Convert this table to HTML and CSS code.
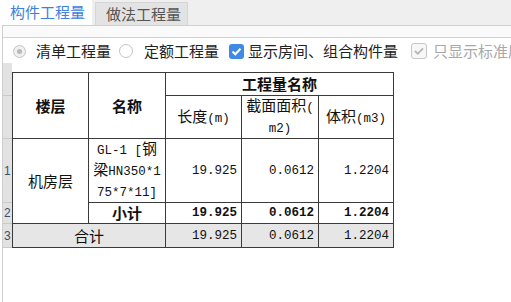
FILE: index.html
```html
<!DOCTYPE html>
<html>
<head>
<meta charset="utf-8">
<link rel="stylesheet" href="styles.css">
</head>
<body>
<div class="tabs">
  <div class="tab active">构件工程量</div>
  <div class="tab">做法工程量</div>
</div>
<div class="panel">
  <div class="band"></div>
  <div class="opts">
    <span class="radio on"><span class="dot"></span></span><span class="lbl l1">清单工程量</span>
    <span class="radio r2"></span><span class="lbl l2">定额工程量</span>
    <span class="cb on"><svg width="15" height="15" viewBox="0 0 15 15"><path d="M3.5 7.5 L6.3 10.3 L11.5 4.8" fill="none" stroke="#fff" stroke-width="2"/></svg></span><span class="lbl l3">显示房间、组合构件量</span>
    <span class="cb dis"><svg width="16" height="16" viewBox="0 0 16 16"><path d="M4 8 L6.8 10.8 L12 5.3" fill="none" stroke="#b4b4b4" stroke-width="1.8"/></svg></span><span class="lbl l4">只显示标准层</span>
  </div>
  <div class="gridwrap">
  <table class="grid">
    <colgroup>
      <col class="c0"><col class="c1"><col class="c2"><col class="c3"><col class="c4"><col class="c5">
    </colgroup>
    <tr class="h1">
      <td class="g"></td>
      <td class="first top b" rowspan="2">楼层</td>
      <td class="top b" rowspan="2">名称</td>
      <td class="top b" colspan="3">工程量名称</td>
    </tr>
    <tr class="h2">
      <td class="g"></td>
      <td>长度<span class="a">(m)</span></td>
      <td class="lh">截面面积<span class="a">(</span><br><span class="a">m2)</span></td>
      <td>体积<span class="a">(m3)</span></td>
    </tr>
    <tr class="d1">
      <td class="g"><span class="gn">1</span></td>
      <td class="first" rowspan="2">机房层</td>
      <td class="lh"><span class="a">GL-1 [</span>钢<br>梁<span class="a">HN350*1</span><br><span class="a">75*7*11]</span></td>
      <td class="num">19.925</td>
      <td class="num">0.0612</td>
      <td class="num">1.2204</td>
    </tr>
    <tr class="d2">
      <td class="g"><span class="gn">2</span></td>
      <td class="b">小计</td>
      <td class="num b">19.925</td>
      <td class="num b">0.0612</td>
      <td class="num b">1.2204</td>
    </tr>
    <tr class="d3">
      <td class="g"><span class="gn">3</span></td>
      <td class="first" colspan="2">合计</td>
      <td class="num">19.925</td>
      <td class="num">0.0612</td>
      <td class="num">1.2204</td>
    </tr>
  </table>
  </div>
</div>
</body>
</html>
```
FILE: styles.css
```css
html, body {
  margin: 0;
  padding: 0;
  background: #fff;
  width: 511px;
  height: 302px;
  overflow: hidden;
  font-family: "Noto Sans CJK SC", sans-serif;
}

.tabs {
  display: flex;
  align-items: flex-end;
  height: 25px;
  background: #efefef;
}

.tab {
  box-sizing: border-box;
  font-size: 15px;
  line-height: 20px;
  flex-shrink: 0;
}

.tab.active {
  width: 92px;
  height: 25px;
  background: #fff;
  color: #3d80de;
  padding: 2px 0 0 10px;
}

.tab:not(.active) {
  margin-left: 3px;
  width: 93px;
  height: 23px;
  background: #e3e3e3;
  border: 1px solid #d6d6d6;
  border-bottom: none;
  color: #555;
  padding: 1px 0 0 10px;
}

.panel {
  margin-left: 2px;
  border-left: 1px solid #cfcfcf;
  border-top: 1px solid #cfcfcf;
  height: 276px;
  overflow: hidden;
}

.band {
  height: 11px;
  background: #fafafa;
  border-bottom: 1px solid #d3d3d3;
}

.opts {
  display: flex;
  align-items: center;
  height: 26px;
  font-size: 15px;
  color: #222;
  white-space: nowrap;
  overflow: hidden;
}

.opts > * { flex-shrink: 0; }

.radio {
  box-sizing: border-box;
  width: 13px;
  height: 13px;
  border: 1px solid #c4c4c4;
  border-radius: 50%;
  background: #fff;
  display: flex;
  align-items: center;
  justify-content: center;
  margin-left: 10px;
}

.radio.on {
  background: #f0f0f0;
}

.radio .dot {
  width: 5px;
  height: 5px;
  border-radius: 50%;
  background: #b9b9b9;
}

.radio.r2 {
  margin-left: 8px;
  width: 14px;
  height: 14px;
}

.lbl { line-height: 20px; }
.l1 { margin-left: 10px; }
.l2 { margin-left: 11px; }
.l3 { margin-left: 4px; }
.l4 { margin-left: 6px; color: #a8a8a8; }

.cb {
  box-sizing: border-box;
  display: flex;
  border-radius: 3px;
}

.cb.on {
  width: 15px;
  height: 15px;
  background: #3f8ae2;
  margin-left: 10px;
}

.cb.dis {
  width: 16px;
  height: 16px;
  border: 1px solid #c6c6c6;
  background: #f7f7f7;
  margin-left: 13px;
}

.cb.dis svg { margin: -1px; }

.gridwrap {
  margin-top: 8px;
  position: relative;
}

.gridwrap::before {
  content: "";
  position: absolute;
  left: 0;
  top: -9px;
  width: 9px;
  height: 9px;
  background: #e2e2e2;
}

.grid {
  table-layout: fixed;
  width: 391px;
  border-collapse: separate;
  border-spacing: 0;
  font-size: 15px;
  color: #111;
}

.c0 { width: 9px; }
.c1 { width: 77px; }
.c2 { width: 77px; }
.c3 { width: 76px; }
.c4 { width: 77px; }
.c5 { width: 75px; }

.grid td {
  box-sizing: border-box;
  padding: 0;
  text-align: center;
  vertical-align: middle;
  border-right: 1px solid #3a3a3a;
  border-bottom: 1px solid #3a3a3a;
  line-height: 18px;
  white-space: nowrap;
}

.grid td.first { border-left: 1px solid #3a3a3a; }
.grid td.top { border-top: 1px solid #3a3a3a; }

.grid td.g {
  background: #e2e2e2;
  border-right: none;
  border-bottom: 1px solid #c9c9c9;
  text-align: left;
  font-family: "Liberation Sans", sans-serif;
  font-size: 12px;
  color: #3f4f6f;
}

.gn { padding-left: 1px; }

.h1 td { height: 24px; }
.h2 td { height: 41px; }
.d1 td { height: 61px; }
.d2 td { height: 21px; }
.d3 td { height: 24px; background: #e6e6e6; }
.d3 td.g { background: #e2e2e2; }

.b { font-weight: 700; }

.a {
  font-family: "Liberation Mono", monospace;
  font-size: 12.5px;
}

.grid td.num {
  font-family: "Liberation Mono", monospace;
  font-size: 12.5px;
  text-align: right;
  padding-right: 4px;
}

.grid td.num.b { font-weight: 700; }
```
